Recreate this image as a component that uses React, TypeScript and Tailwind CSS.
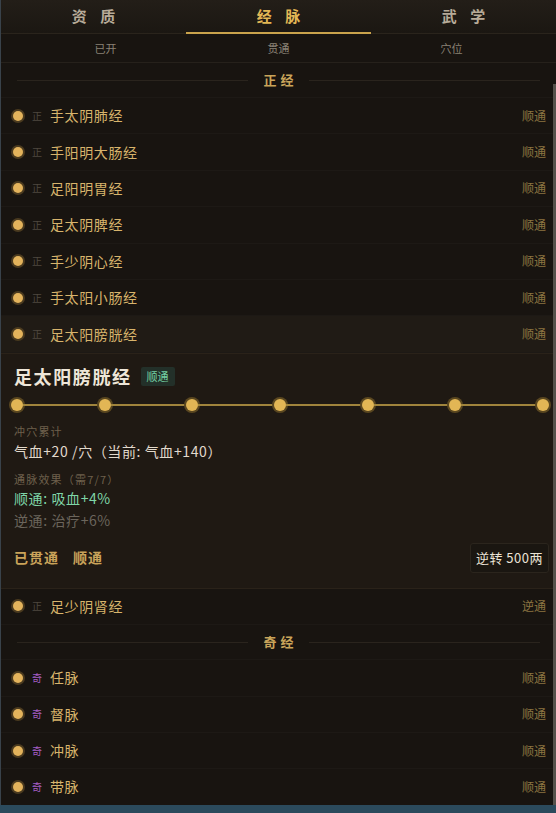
import React from "react";

type Row = { name: string; tag: string; state: string; selected?: boolean };

const zheng: Row[] = [
  { name: "手太阴肺经", tag: "正", state: "顺通" },
  { name: "手阳明大肠经", tag: "正", state: "顺通" },
  { name: "足阳明胃经", tag: "正", state: "顺通" },
  { name: "足太阴脾经", tag: "正", state: "顺通" },
  { name: "手少阴心经", tag: "正", state: "顺通" },
  { name: "手太阳小肠经", tag: "正", state: "顺通" },
  { name: "足太阳膀胱经", tag: "正", state: "顺通", selected: true },
];

const qi: Row[] = [
  { name: "任脉", tag: "奇", state: "顺通" },
  { name: "督脉", tag: "奇", state: "顺通" },
  { name: "冲脉", tag: "奇", state: "顺通" },
  { name: "带脉", tag: "奇", state: "顺通" },
];

const font = { fontFamily: '"Noto Sans CJK SC", "Noto Sans", sans-serif' };

const MeridianRow: React.FC<{ row: Row }> = ({ row }) => (
  <div
    className={`h-[36.4px] flex items-center pl-[12px] pr-[10px] border-b border-[#1d1915] ${
      row.selected ? "bg-[#201b15]" : ""
    }`}
  >
    <span className="w-[10px] h-[10px] rounded-full bg-[#e3b35c] ring-2 ring-[#4a3a1f]" />
    <span
      className={`ml-[9px] text-[10px] leading-none ${
        row.tag === "奇" ? "text-[#a45ec4]" : "text-[#4f483f]"
      }`}
    >
      {row.tag}
    </span>
    <span className="ml-[8px] text-[14px] text-[#d8b46c] tracking-[0.6px]">{row.name}</span>
    <span className="ml-auto text-[12px] text-[#8c7440]">{row.state}</span>
  </div>
);

const SectionHeader: React.FC<{ title: string }> = ({ title }) => (
  <div className="h-[35px] flex items-center px-[16px] gap-[12px] border-b border-[#1d1915]">
    <div className="flex-1 h-px bg-[#2a241d]" />
    <span className="text-[13px] font-bold text-[#c9a45a] tracking-[0.3em] pl-[0.3em]">{title}</span>
    <div className="flex-1 h-px bg-[#2a241d]" />
  </div>
);

const Dot: React.FC = () => (
  <span className="w-[12px] h-[12px] shrink-0 rounded-full bg-[#e2b655] ring-2 ring-[#5a4720]" />
);

const Detail: React.FC = () => (
  <div className="bg-[#1f1913] border-t border-[#2a2219] border-b border-b-[#2a2219] pt-[11px] pb-[15px]">
    <div className="flex items-center pl-[13px] h-[24px]">
      <span className="text-[18px] font-bold text-[#eee6d8] tracking-[1.6px]">足太阳膀胱经</span>
      <span className="ml-[9px] text-[11px] text-[#73cfa2] bg-[#233029] px-[6px] py-[1px] rounded-[2px]">
        顺通
      </span>
    </div>
    <div className="mt-[9px] flex items-center pl-[10px] pr-[7px] h-[14px]">
      <Dot />
      <div className="flex-1 h-[2px] bg-[#a0843c]" />
      <Dot />
      <div className="flex-1 h-[2px] bg-[#a0843c]" />
      <Dot />
      <div className="flex-1 h-[2px] bg-[#a0843c]" />
      <Dot />
      <div className="flex-1 h-[2px] bg-[#a0843c]" />
      <Dot />
      <div className="flex-1 h-[2px] bg-[#a0843c]" />
      <Dot />
      <div className="flex-1 h-[2px] bg-[#a0843c]" />
      <Dot />
    </div>
    <div className="pl-[13px]">
      <div className="mt-[12px] text-[11px] leading-[14px] text-[#6e604c] tracking-[1.2px]">冲穴累计</div>
      <div className="mt-[4px] text-[14px] leading-[18px] text-[#e2dacd] tracking-[0.6px]">
        气血+20 /穴（当前: 气血+140）
      </div>
      <div className="mt-[12px] text-[11px] leading-[14px] text-[#6e604c] tracking-[1.2px]">通脉效果（需7/7）</div>
      <div className="mt-[3px] text-[14px] leading-[18px] text-[#7fd6a8] tracking-[0.6px]">顺通: 吸血+4%</div>
      <div className="mt-[4px] text-[14px] leading-[18px] text-[#6b655c] tracking-[0.6px]">逆通: 治疗+6%</div>
    </div>
    <div className="mt-[14px] h-[30px] flex items-center pl-[13px] pr-[7px]">
      <span className="text-[14px] font-bold text-[#c9a35a] tracking-[1px]">已贯通</span>
      <span className="ml-[14px] text-[14px] font-bold text-[#c9a35a] tracking-[1px]">顺通</span>
      <button className="ml-auto h-[30px] px-[5px] bg-[#1a1611] border border-[#2b251d] rounded-[3px] text-[13px] text-[#ebe3d6] tracking-[0.5px]">
        逆转 500两
      </button>
    </div>
  </div>
);

export default function App() {
  return (
    <div className="w-[556px] h-[813px] overflow-hidden bg-[#2b4a5c] flex flex-col" style={font}>
      <div className="h-[805px] shrink-0 flex flex-col bg-[#181410] border-l border-[#39424a] relative">
        <div className="h-[34px] shrink-0 grid grid-cols-3 bg-gradient-to-b from-[#231e18] to-[#1b1712] border-b border-[#2a241c]">
          <div className="flex items-center justify-center text-[15px] font-bold text-[#b7ab99] tracking-[0.9em] pl-[0.9em]">
            资质
          </div>
          <div className="relative flex items-center justify-center text-[15px] font-bold text-[#e2b755] tracking-[0.9em] pl-[0.9em]">
            经脉
            <span className="absolute left-0 right-0 bottom-[-1px] h-[2px] bg-[#caa34c]" />
          </div>
          <div className="flex items-center justify-center text-[15px] font-bold text-[#b7ab99] tracking-[0.9em] pl-[0.9em]">
            武学
          </div>
        </div>
        <div className="flex-1 overflow-hidden relative">
          <div className="h-[29px] grid grid-cols-3 px-[18px] border-b border-[#26211b]">
            <div className="flex flex-col items-center justify-end pb-[7px] text-[11px] leading-[14px] text-[#8a8275]">已开</div>
            <div className="flex flex-col items-center justify-end pb-[7px] text-[11px] leading-[14px] text-[#8a8275]">贯通</div>
            <div className="flex flex-col items-center justify-end pb-[7px] text-[11px] leading-[14px] text-[#8a8275]">穴位</div>
          </div>
          <SectionHeader title="正经" />
          {zheng.map((r) => (
            <MeridianRow key={r.name} row={r} />
          ))}
          <Detail />
          <MeridianRow row={{ name: "足少阴肾经", tag: "正", state: "逆通" }} />
          <SectionHeader title="奇经" />
          {qi.map((r) => (
            <MeridianRow key={r.name} row={r} />
          ))}
          <div className="absolute right-0 top-[50px] bottom-0 w-[3px] bg-[#55514b]" />
        </div>
      </div>
    </div>
  );
}
